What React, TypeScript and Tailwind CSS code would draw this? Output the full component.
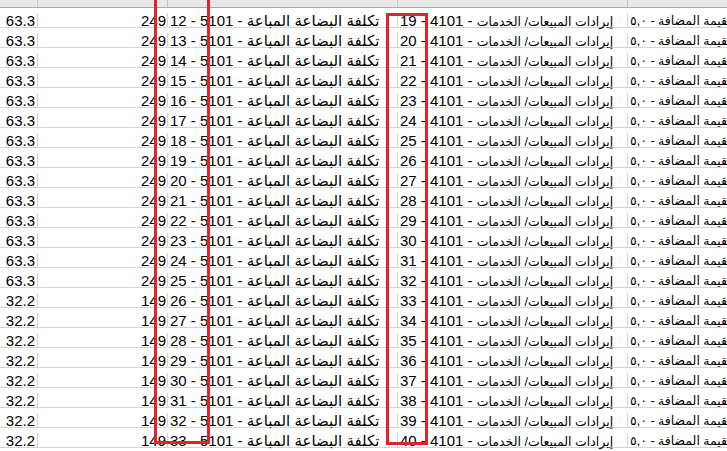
import React from "react";

type Row = {
  ratio: string;
  amount: string;
  costNo: number;
  revNo: number;
};

const rows: Row[] = Array.from({ length: 23 }, (_, i) => ({
  ratio: i < 14 ? "63.3" : "32.2",
  amount: i < 14 ? "249" : "149",
  costNo: 12 + i,
  revNo: 19 + i,
}));

const font = { fontFamily: '"Liberation Sans", "DejaVu Sans", Arial, sans-serif' };

const SheetRow = ({ row }: { row: Row }) => {
  return (
    <div className="flex h-[20px] shrink-0 border-b border-[#d4d4d4] pt-[5px] text-[15px] leading-[16px] text-black">
      {/* ratio */}
      <div className="w-[38px] shrink-0 border-r border-[#d4d4d4] pr-[2px] text-right">{row.ratio}</div>
      {/* amount */}
      <div className="w-[130px] shrink-0 border-r border-[#d4d4d4] pr-[1px] text-right">{row.amount}</div>
      {/* cost of goods sold */}
      <div className="w-[230px] shrink-0 whitespace-nowrap border-r border-[#d4d4d4] pl-[2px]">
        <span dir="rtl" className="inline-block">
          تكلفة البضاعة المباعة - 5101 - {row.costNo}
        </span>
      </div>
      {/* sales revenue */}
      <div className="w-[230px] shrink-0 whitespace-nowrap border-r border-[#d4d4d4] pl-[2px]">
        <span dir="rtl" className="inline-block">
          <span className="text-[12.5px]">إيرادات المبيعات/ الخدمات</span> - 4101 - {row.revNo}
        </span>
      </div>
      {/* vat */}
      <div className="flex min-w-0 flex-1 justify-start overflow-hidden whitespace-nowrap pl-[2px]">
        <span dir="rtl" className="inline-block text-[12.5px]">
          ضريبة القيمة المضافة - ٥,٠
        </span>
      </div>
    </div>
  );
};

export default function App() {
  return (
    <div className="relative h-[451px] w-[727px] overflow-hidden bg-white" style={font}>
      {/* header strip */}
      <div className="flex h-[8px] border-b border-[#a9a9a9] bg-[#e8e8e8]">
        <div className="w-[38px] border-r border-[#c4c4c4]" />
        <div className="w-[130px] border-r border-[#c4c4c4]" />
        <div className="w-[230px] border-r border-[#c4c4c4]" />
        <div className="w-[230px] border-r border-[#c4c4c4]" />
        <div className="flex-1" />
      </div>

      <div className="flex flex-col">
        {rows.map((r) => (
          <SheetRow key={r.costNo} row={r} />
        ))}
      </div>

      {/* highlight boxes */}
      <div className="absolute left-[154px] top-[-4px] h-[448px] w-[56px] border-[3px] border-[#e3232b]" />
      <div className="absolute left-[386px] top-[13px] h-[432px] w-[42px] border-[3px] border-[#e3232b]" />
    </div>
  );
}
